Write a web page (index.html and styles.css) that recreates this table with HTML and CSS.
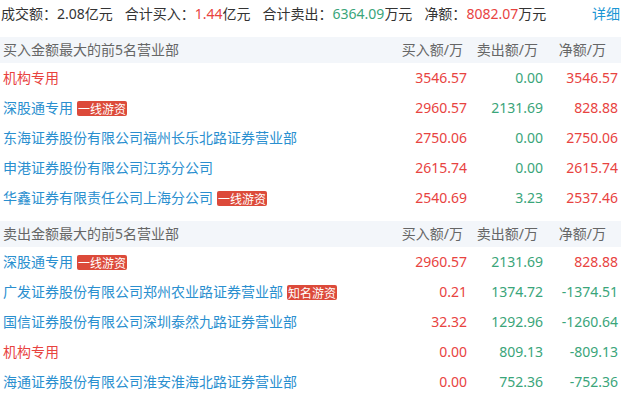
FILE: index.html
```html
<!DOCTYPE html>
<html lang="zh">
<head>
<meta charset="utf-8">
<link rel="stylesheet" href="styles.css">
</head>
<body>
<div class="page">
  <div class="summary">
    <span class="item">成交额：2.08亿元</span>
    <span class="item">合计买入：<span class="red">1.44</span>亿元</span>
    <span class="item">合计卖出：<span class="green">6364.09</span>万元</span>
    <span class="item">净额：<span class="red">8082.07</span>万元</span>
    <a class="detail">详细</a>
  </div>

  <div class="section">
    <div class="row head">
      <div class="name">买入金额最大的前5名营业部</div>
      <div class="num h2">买入额/万</div>
      <div class="num h3">卖出额/万</div>
      <div class="num h4">净额/万</div>
    </div>
    <div class="row">
      <div class="name red">机构专用</div>
      <div class="num red">3546.57</div>
      <div class="num green">0.00</div>
      <div class="num red">3546.57</div>
    </div>
    <div class="row">
      <div class="name blue">深股通专用<span class="tag">一线游资</span></div>
      <div class="num red">2960.57</div>
      <div class="num green">2131.69</div>
      <div class="num red">828.88</div>
    </div>
    <div class="row">
      <div class="name blue">东海证券股份有限公司福州长乐北路证券营业部</div>
      <div class="num red">2750.06</div>
      <div class="num green">0.00</div>
      <div class="num red">2750.06</div>
    </div>
    <div class="row">
      <div class="name blue">申港证券股份有限公司江苏分公司</div>
      <div class="num red">2615.74</div>
      <div class="num green">0.00</div>
      <div class="num red">2615.74</div>
    </div>
    <div class="row">
      <div class="name blue">华鑫证券有限责任公司上海分公司<span class="tag">一线游资</span></div>
      <div class="num red">2540.69</div>
      <div class="num green">3.23</div>
      <div class="num red">2537.46</div>
    </div>
  </div>

  <div class="section second">
    <div class="row head">
      <div class="name">卖出金额最大的前5名营业部</div>
      <div class="num h2">买入额/万</div>
      <div class="num h3">卖出额/万</div>
      <div class="num h4">净额/万</div>
    </div>
    <div class="row">
      <div class="name blue">深股通专用<span class="tag">一线游资</span></div>
      <div class="num red">2960.57</div>
      <div class="num green">2131.69</div>
      <div class="num red">828.88</div>
    </div>
    <div class="row">
      <div class="name blue">广发证券股份有限公司郑州农业路证券营业部<span class="tag">知名游资</span></div>
      <div class="num red">0.21</div>
      <div class="num green">1374.72</div>
      <div class="num green">-1374.51</div>
    </div>
    <div class="row">
      <div class="name blue">国信证券股份有限公司深圳泰然九路证券营业部</div>
      <div class="num red">32.32</div>
      <div class="num green">1292.96</div>
      <div class="num green">-1260.64</div>
    </div>
    <div class="row">
      <div class="name red">机构专用</div>
      <div class="num red">0.00</div>
      <div class="num green">809.13</div>
      <div class="num green">-809.13</div>
    </div>
    <div class="row">
      <div class="name blue">海通证券股份有限公司淮安淮海北路证券营业部</div>
      <div class="num red">0.00</div>
      <div class="num green">752.36</div>
      <div class="num green">-752.36</div>
    </div>
  </div>
</div>
</body>
</html>
```

FILE: styles.css
```css
html, body {
  margin: 0;
  padding: 0;
  background: #ffffff;
}
body {
  font-family: "Noto Sans", "Noto Sans CJK SC", sans-serif;
  font-size: 14px;
  color: #333333;
}
.page {
  width: 621px;
}
.summary {
  display: flex;
  align-items: center;
  height: 25px;
  padding-left: 1px;
  margin-bottom: 12px;
  white-space: nowrap;
}
.summary .item {
  margin-right: 12px;
}
.detail {
  margin-left: auto;
  color: #1a96d4;
  margin-right: 1px;
}
.section.second {
  margin-top: 8px;
}
.row {
  display: grid;
  grid-template-columns: 1fr 80px 76px 75px;
  height: 30px;
  line-height: 30px;
  padding-right: 3px;
  white-space: nowrap;
}
.row.head {
  height: 26px;
  line-height: 26px;
  background: #f3f6fa;
  color: #666666;
}
.name {
  padding-left: 3px;
  display: flex;
  align-items: center;
}
.num {
  text-align: right;
}
.head .h2 { padding-right: 4px; }
.head .h3 { padding-right: 5px; }
.head .h4 { padding-right: 12px; }
.red { color: #e8433f; }
.green { color: #3aa57a; }
.blue { color: #2a8fcf; }
.tag {
  display: inline-block;
  margin-left: 4px;
  height: 15px;
  line-height: 15px;
  padding: 0 1px;
  font-family: "Noto Sans CJK SC", sans-serif;
  font-size: 12px;
  color: #ffffff;
  background: #dc4a3a;
  border-radius: 2px;
}
```
